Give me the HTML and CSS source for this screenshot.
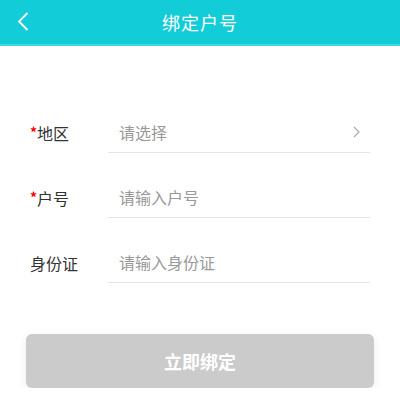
FILE: index.html
```html
<!DOCTYPE html>
<html lang="zh-CN">
<head>
    <meta charset="UTF-8">
    <meta name="viewport" content="width=device-width, initial-scale=1.0">
    <title>绑定户号</title>
    <link rel="stylesheet" href="styles.css">
</head>
<body>
    <div class="header">
        <a class="back" href="#">
            <svg width="12" height="19" viewBox="0 0 12 19"><path d="M10.5 1 L2 9.5 L10.5 18" fill="none" stroke="#fff" stroke-width="1.8"/></svg>
        </a>
        <h1>绑定户号</h1>
    </div>
    <form class="form">
        <div class="row">
            <label><span class="req">*</span>地区</label>
            <div class="field">
                <span class="placeholder">请选择</span>
                <svg class="arrow" width="7" height="12" viewBox="0 0 7 12"><path d="M1 1 L6 6 L1 11" fill="none" stroke="#aaa" stroke-width="1.2"/></svg>
            </div>
        </div>
        <div class="row">
            <label><span class="req">*</span>户号</label>
            <div class="field">
                <input type="text" placeholder="请输入户号">
            </div>
        </div>
        <div class="row">
            <label>身份证</label>
            <div class="field">
                <input type="text" placeholder="请输入身份证">
            </div>
        </div>
        <button type="button" class="submit">立即绑定</button>
    </form>
</body>
</html>
```

FILE: styles.css
```css
body {
    margin: 0;
    padding: 0;
    background-color: #fff;
    font-family: "Noto Sans CJK SC", "Noto Sans", sans-serif;
}
.header {
    position: relative;
    height: 44px;
    background-color: #12cdd8;
    border-bottom: 2px solid #3fd8e0;
    display: flex;
    align-items: center;
    justify-content: center;
}
.back {
    position: absolute;
    left: 17px;
    top: 12px;
    display: block;
}
.header h1 {
    margin: 0;
    font-size: 18px;
    font-weight: normal;
    color: #fff;
    letter-spacing: 1px;
}
.form {
    padding: 42px 30px 0 30px;
}
.row {
    display: flex;
    align-items: flex-end;
    height: 65px;
}
.row label {
    width: 78px;
    font-size: 16px;
    color: #333;
    line-height: 20px;
    padding-bottom: 10px;
}
.req {
    color: #f00;
    font-weight: bold;
    font-size: 14px;
    vertical-align: 2px;
}
.field {
    flex: 1;
    display: flex;
    align-items: center;
    justify-content: space-between;
    border-bottom: 1px solid #e5e5e5;
    height: 40px;
    padding-left: 11px;
}
.placeholder {
    font-size: 16px;
    color: #999;
}
.arrow {
    margin-right: 10px;
}
.field input {
    border: none;
    outline: none;
    padding: 0;
    width: 100%;
    font-family: inherit;
    font-size: 16px;
    color: #333;
    background: transparent;
}
.field input::placeholder {
    color: #999;
}
.submit {
    display: block;
    width: 348px;
    height: 54px;
    margin: 51px 0 0 -4px;
    background-color: #cbcbcb;
    color: #fff;
    border: none;
    border-radius: 6px;
    font-family: inherit;
    font-size: 18px;
    font-weight: bold;
    box-shadow: 0 3px 10px rgba(0, 0, 0, 0.08);
}
```
